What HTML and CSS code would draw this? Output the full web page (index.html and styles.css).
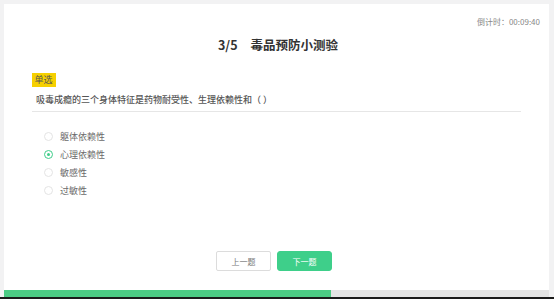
FILE: index.html
```html
<!DOCTYPE html>
<html lang="zh">
<head>
<meta charset="utf-8">
<link rel="stylesheet" href="styles.css">
</head>
<body>
<div class="page">
  <div class="card">
    <div class="timer">倒计时：00:09:40</div>
    <h1 class="title"><span class="num">3/5</span><span>毒品预防小测验</span></h1>
    <div class="body">
      <span class="tag">单选</span>
      <div class="question">吸毒成瘾的三个身体特征是药物耐受性、生理依赖性和（ ）</div>
      <ul class="options">
        <li class="option"><span class="radio"></span>躯体依赖性</li>
        <li class="option checked"><span class="radio"></span>心理依赖性</li>
        <li class="option"><span class="radio"></span>敏感性</li>
        <li class="option"><span class="radio"></span>过敏性</li>
      </ul>
    </div>
    <div class="actions">
      <button class="btn btn-prev">上一题</button>
      <button class="btn btn-next">下一题</button>
    </div>
    <div class="progress"><div class="progress-fill" style="width:60%"></div></div>
  </div>
</div>
<div class="edge"></div>
</body>
</html>
```
FILE: styles.css
```css
html, body {
  margin: 0;
  padding: 0;
  background: #f2f2f3;
  font-family: "Noto Sans CJK SC", "Noto Sans", sans-serif;
}
.page {
  padding: 4px 5px 0 4px;
  height: 293px;
  box-sizing: content-box;
}
.card {
  background: #fff;
  height: 293px;
  display: flex;
  flex-direction: column;
}
.timer {
  margin-top: 13px;
  padding-right: 9px;
  text-align: right;
  font-size: 8px;
  line-height: 10px;
  color: #888;
}
.title {
  margin: 10px 0 0;
  text-align: center;
  font-size: 12.5px;
  line-height: 16px;
  font-weight: 700;
  color: #333;
  display: flex;
  justify-content: center;
  gap: 13px;
  padding-left: 3px;
}
.body {
  padding: 0 28px;
  margin-top: 20px;
}
.tag {
  display: block;
  width: fit-content;
  background: #f6d000;
  color: #555;
  font-size: 9px;
  line-height: 14px;
  height: 14px;
  padding: 0 3px 0 2.5px;
}
.question {
  margin-top: 7px;
  padding: 0 0 5px 4px;
  font-size: 9px;
  line-height: 12px;
  font-weight: 500;
  color: #555;
  border-bottom: 1px solid #e6e6e6;
}
.options {
  list-style: none;
  margin: 15px 0 0;
  padding: 0 0 0 12px;
}
.option {
  display: flex;
  align-items: center;
  height: 18px;
  font-size: 9px;
  color: #6a6a6a;
}
.radio {
  width: 9px;
  height: 9px;
  box-sizing: border-box;
  border: 1px solid #e4e4e4;
  border-radius: 50%;
  margin-right: 7px;
  position: relative;
}
.option.checked .radio {
  border-color: #3fcd8a;
}
.option.checked .radio::after {
  content: "";
  position: absolute;
  left: 2px;
  top: 2px;
  width: 3px;
  height: 3px;
  border-radius: 50%;
  background: #3fcd8a;
}
.actions {
  margin-top: 52px;
  display: flex;
  justify-content: center;
  gap: 6px;
  padding-right: 5px;
}
.btn {
  width: 55px;
  height: 20px;
  box-sizing: border-box;
  font-family: inherit;
  font-size: 8px;
  padding: 0;
  border-radius: 2px;
  cursor: pointer;
}
.btn-prev {
  background: #fff;
  border: 1px solid #dcdcdc;
  color: #777;
}
.btn-next {
  background: #3ecf8a;
  border: 1px solid #3ecf8a;
  color: #fff;
  border-radius: 3px;
}
.progress {
  margin-top: auto;
  height: 7px;
  background: #e4e4e4;
}
.progress-fill {
  height: 100%;
  background: #4ccb84;
}
.edge {
  height: 2px;
  background: #1b1b1b;
}
```
